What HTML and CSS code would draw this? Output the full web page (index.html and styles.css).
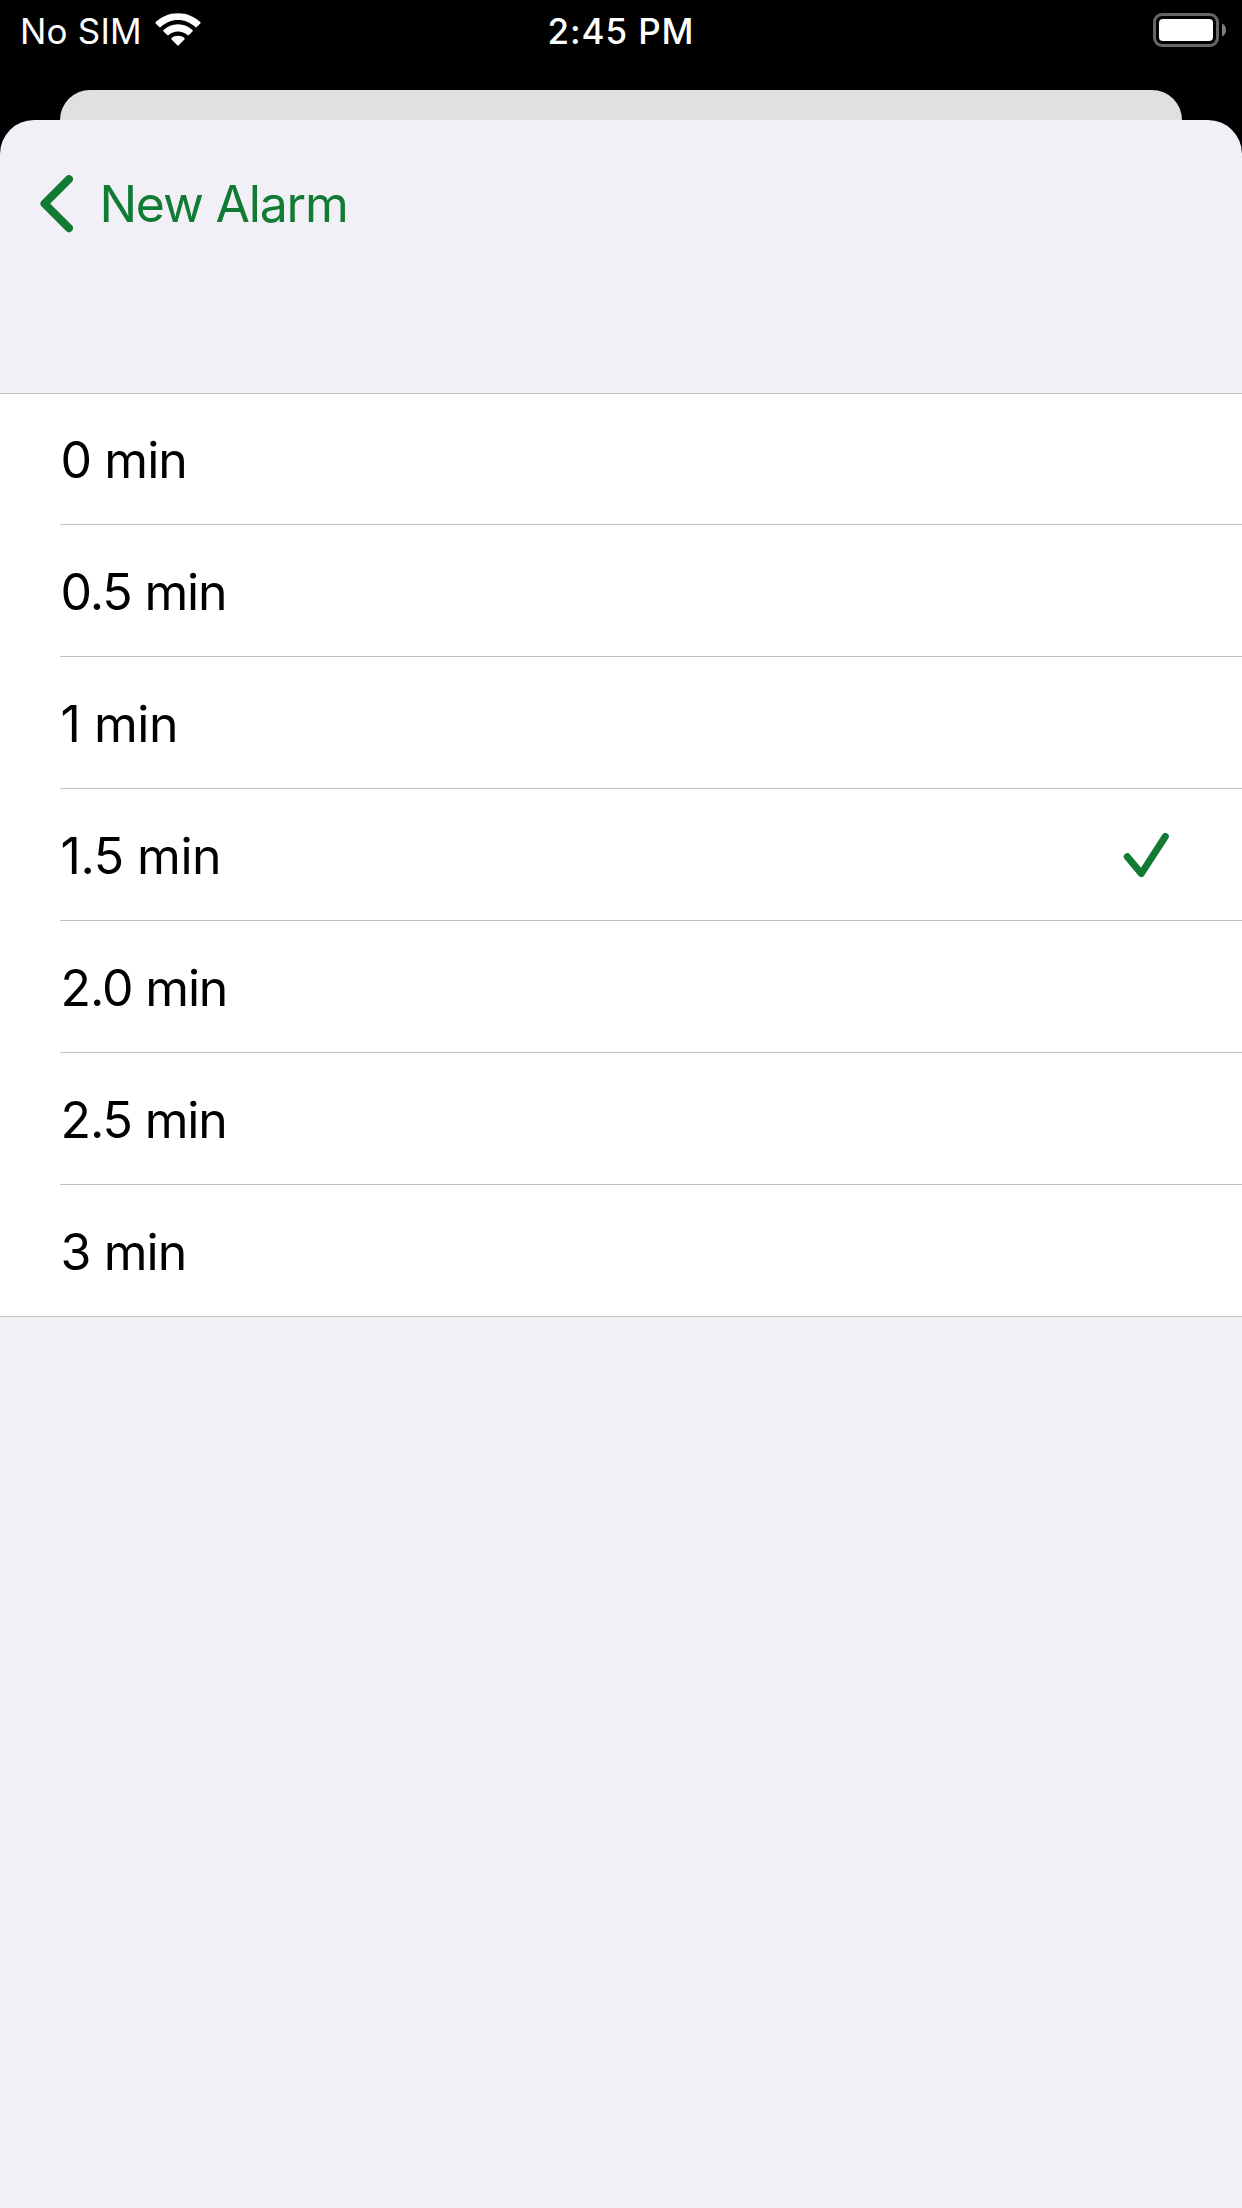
FILE: index.html
```html
<!DOCTYPE html>
<html lang="en">
<head>
<meta charset="utf-8">
<title>New Alarm</title>
<link rel="stylesheet" href="styles.css">
</head>
<body>
<div class="screen">
  <header class="status">
    <div class="status-left">
      <span class="carrier">No SIM</span>
      <svg class="wifi" width="46" height="34" viewBox="0 0 46 34" fill="#fff">
        <path d="M23 .2C31.800 .2 39.800 3.600 45.300 9.100Q46 9.800 45.300 10.500L41.700 14.100Q41 14.800 40.300 14.100C35.800 9.700 29.700 7 23 7S10.200 9.700 5.700 14.100Q5 14.800 4.300 14.100L.7 10.500Q0 9.800 .7 9.100C6.200 3.600 14.200 .2 23 .2Z"/>
        <path d="M23 11.200C28.700 11.200 33.800 13.400 37.500 17Q38.200 17.700 37.500 18.400L33.800 22Q33.100 22.700 32.400 22C29.900 19.800 26.600 18.400 23 18.400S16.100 19.800 13.600 22Q12.900 22.700 12.200 22L8.500 18.400Q7.800 17.700 8.500 17C12.200 13.400 17.300 11.200 23 11.200Z"/>
        <path d="M23 22.800C25.400 22.800 27.700 23.600 29.400 25.100Q30.100 25.800 29.400 26.500L23.700 32.300Q23 33 22.300 32.300L16.600 26.500Q15.900 25.800 16.600 25.100C18.300 23.600 20.600 22.800 23 22.800Z"/>
      </svg>
    </div>
    <time class="clock">2:45 PM</time>
    <svg class="battery" width="74" height="34" viewBox="0 0 74 34">
      <rect x="1.500" y="1.500" width="63" height="31" rx="7.500" fill="none" stroke="#666" stroke-width="3"/>
      <rect x="6" y="6" width="54" height="22" rx="4" fill="#fff"/>
      <path d="M69 10.500C71.500 11.500 73 14 73 17S71.500 22.500 69 23.500Z" fill="#808080"/>
    </svg>
  </header>
  <div class="card-behind"></div>
  <main class="sheet">
    <nav class="nav">
      <svg class="chevron" width="33" height="58" viewBox="0 0 33 58">
        <path d="M29 4.200L4.500 28.700L29 53.200" fill="none" stroke="#117a33" stroke-width="8" stroke-linecap="round" stroke-linejoin="round"/>
      </svg>
      <span class="back">New Alarm</span>
    </nav>
    <ul class="list">
      <li class="row"><div class="cell">0 min</div></li>
      <li class="row"><div class="cell tight">0.5 min</div></li>
      <li class="row"><div class="cell loose">1 min</div></li>
      <li class="row"><div class="cell loose">1.5 min
        <svg class="check" width="46" height="46" viewBox="0 0 46 46">
          <path d="M4.300 24.800L18.300 41.600L42.300 4.500" fill="none" stroke="#117a33" stroke-width="7" stroke-linecap="round" stroke-linejoin="round"/>
        </svg></div></li>
      <li class="row"><div class="cell tight">2.0 min</div></li>
      <li class="row"><div class="cell tight">2.5 min</div></li>
      <li class="row"><div class="cell">3 min</div></li>
    </ul>
  </main>
</div>
</body>
</html>
```
FILE: styles.css
```css
* {
  box-sizing: border-box;
}

body {
  margin: 0;
  background: #000;
  font-family: Inter, "Liberation Sans", sans-serif;
}

.screen {
  display: flex;
  flex-direction: column;
  height: 2208px;
  background: #000;
}

.status {
  display: grid;
  grid-template-columns: 1fr auto 1fr;
  height: 90px;
  padding: 10px 15px 0;
  color: #fff;
  font-size: 35px;
  line-height: 42px;
  align-items: start;
}

.status-left {
  display: flex;
  padding-left: 5px;
}

.carrier {
  letter-spacing: 0.2px;
}

.wifi {
  margin: 3px 0 0 13.500px;
}

.clock {
  font-weight: 550;
  letter-spacing: 0.9px;
}

.battery {
  justify-self: end;
  margin-top: 3px;
}

.card-behind {
  height: 30px;
  margin: 0 60px;
  background: #e0e0e0;
  border-radius: 30px 30px 0 0;
}

.sheet {
  flex: 1;
  background: #f1f0f6;
  border-radius: 34px 34px 0 0;
}

.nav {
  display: flex;
  height: 273px;
  padding: 54px 0 0 40px;
  color: #117a33;
  font-size: 50px;
  line-height: 60px;
}

.chevron {
  margin: 1px 26.400px 0 0;
}

.back {
  letter-spacing: -1.200px;
}

.list {
  margin: 0;
  padding: 0;
  list-style: none;
  background: #fff;
}

.row {
  display: flex;
  height: 132px;
  padding-left: 60px;
}

.row:first-child {
  border-top: 1px solid #c2c2c4;
}

.row:last-child {
  border-bottom: 1px solid #c2c2c4;
}

.cell {
  display: flex;
  flex: 1;
  justify-content: space-between;
  padding: 37px 73px 0 0.600px;
  border-bottom: 1px solid #c2c2c4;
  color: #000;
  font-size: 50px;
  line-height: 60px;
  letter-spacing: -0.950px;
}

.row:first-child .cell {
  padding-top: 36px;
}

.row:last-child .cell {
  border-bottom: 0;
}

.tight {
  letter-spacing: -1.150px;
}

.loose {
  letter-spacing: -0.500px;
}

.check {
  margin-top: 6px;
}
```
